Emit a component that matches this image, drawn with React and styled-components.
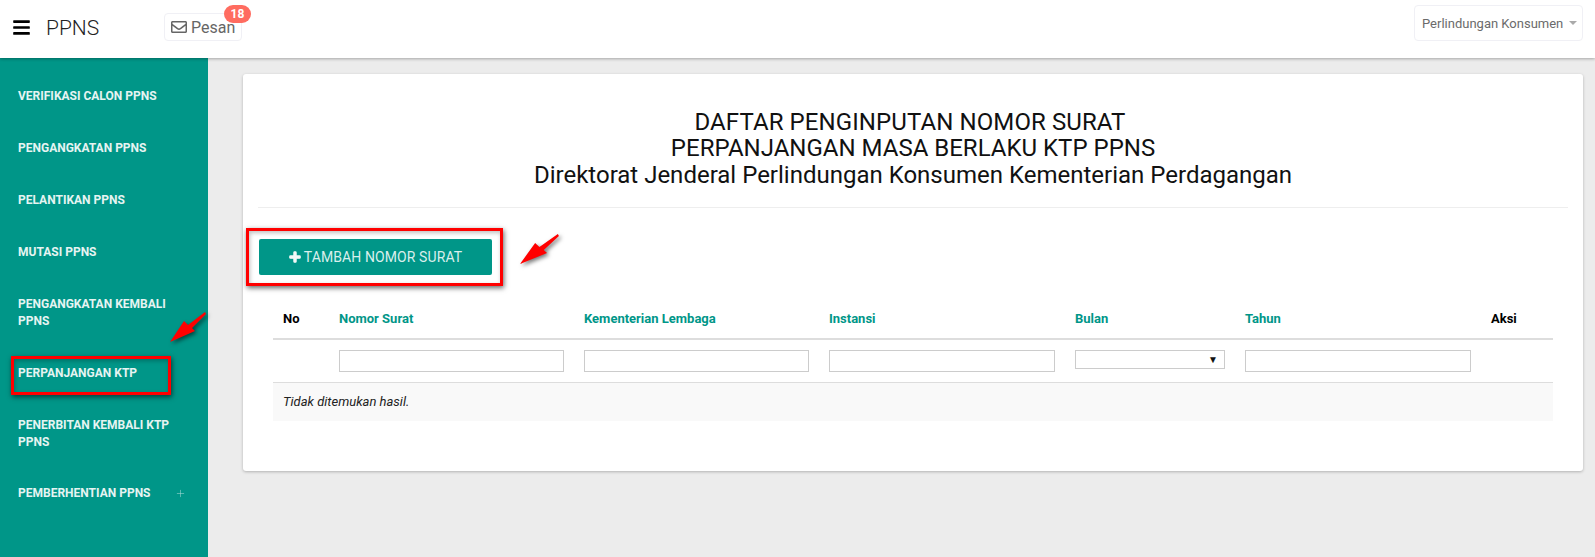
import React from 'react';
import styled, { createGlobalStyle } from 'styled-components';
import { FaBars, FaRegEnvelope, FaPlus } from 'react-icons/fa';
import { Plus } from 'lucide-react';

const GlobalStyle = createGlobalStyle`
  html, body { margin: 0; padding: 0; height: 100%; overflow: hidden; }
  body { font-family: Roboto, "Liberation Sans", sans-serif; background: #ececec; color: #000; }
  * { box-sizing: border-box; }
`;

const Page = styled.div`
  position: relative;
  width: 1595px;
  height: 557px;
  overflow: hidden;
  display: flex;
  flex-direction: column;
`;

const Header = styled.header`
  position: relative;
  z-index: 2;
  height: 58px;
  flex: none;
  background: #fff;
  box-shadow: 0 1px 3px rgba(0, 0, 0, 0.3);
  display: flex;
  align-items: flex-start;
  padding: 5px 12px 0 13px;
`;

const Burger = styled.div`
  width: 17px;
  margin-top: 13px;
  font-size: 19px;
  line-height: 19px;
  color: #000;
  display: flex;
  svg { display: block; }
`;

const Brand = styled.div`
  margin: 11px 0 0 16px;
  width: 118px;
  font-size: 21px;
  line-height: 24px;
  font-weight: 300;
  color: #222;
`;

const MessageButton = styled.div`
  position: relative;
  margin-top: 8px;
  width: 78px;
  height: 28px;
  border: 1px solid #f0f0f5;
  border-radius: 4px;
  display: flex;
  align-items: center;
  gap: 4px;
  padding-left: 6px;
  font-size: 16px;
  color: #666;
`;

const Badge = styled.span`
  position: absolute;
  top: -9px;
  left: 59px;
  width: 27px;
  height: 18px;
  border-radius: 9px;
  background: #ff6c60;
  color: #fff;
  font-size: 12px;
  font-weight: 700;
  display: flex;
  align-items: center;
  justify-content: center;
`;

const Dropdown = styled.div`
  margin-left: auto;
  width: 169px;
  height: 36px;
  border: 1px solid #f0f0f5;
  border-radius: 4px;
  display: flex;
  align-items: center;
  padding-left: 7px;
  font-size: 13px;
  color: #6b6b6b;
`;

const Caret = styled.span`
  margin-left: 6px;
  width: 0;
  height: 0;
  border-left: 4px solid transparent;
  border-right: 4px solid transparent;
  border-top: 4px solid #aaa;
`;

const Body = styled.div`
  flex: 1;
  display: flex;
  min-height: 0;
`;

const Sidebar = styled.nav`
  width: 208px;
  flex: none;
  background: #009688;
  padding-top: 12px;
`;

const MenuItem = styled.div`
  position: relative;
  padding: 17.5px 18px;
  font-size: 12px;
  line-height: 17px;
  font-weight: 700;
  color: #e6f4f2;
  &:last-child { margin-top: -1px; }
`;

const MenuPlus = styled.span`
  position: absolute;
  top: 21px;
  left: 175px;
  color: #a5dbd4;
  display: flex;
`;

const Main = styled.main`
  flex: 1;
  padding: 16px 12px 0 35px;
  min-width: 0;
`;

const Card = styled.section`
  position: relative;
  height: 397px;
  background: #fff;
  border-radius: 3px;
  box-shadow: 0 1px 3px rgba(0, 0, 0, 0.25);
  padding: 35px 15px 0;
`;

const Title = styled.h1`
  margin: 0;
  font-size: 24px;
  line-height: 26.4px;
  font-weight: 400;
  text-align: center;
  color: #111;
`;

const TitleFirstLine = styled.span`
  letter-spacing: 0.1px;
`;

const Rule = styled.hr`
  margin: 19px 0 0;
  border: 0;
  border-top: 1px solid #eee;
`;

const Toolbar = styled.div`
  position: relative;
  margin: 31px 0 0 1px;
`;

const AddButton = styled.button`
  width: 233px;
  height: 36px;
  border: 0;
  border-radius: 2px;
  background: #009688;
  color: #d9efec;
  font-family: inherit;
  font-size: 14px;
  letter-spacing: 0.1px;
  display: flex;
  align-items: center;
  justify-content: center;
  gap: 3px;
  svg { color: #f2f8f7; stroke: currentColor; stroke-width: 50; }
`;

const Highlight = styled.div`
  position: absolute;
  left: ${p => p.$left}px;
  top: ${p => p.$top}px;
  width: ${p => p.$width}px;
  height: ${p => p.$height}px;
  border: 3.5px solid #f00;
  box-shadow: 1px 2px 5px rgba(0, 0, 0, 0.6), inset 1px 2px 4px rgba(0, 0, 0, 0.25);
  pointer-events: none;
`;

const ArrowSvg = styled.svg`
  position: absolute;
  left: ${p => p.$left}px;
  top: ${p => p.$top}px;
  overflow: visible;
  filter: drop-shadow(2px 2px 2px rgba(0, 0, 0, 0.55));
`;

const Grid = styled.table`
  width: 1280px;
  margin: 21px 0 0 15px;
  border-collapse: collapse;
  table-layout: fixed;
  font-size: 12px;
`;

const Th = styled.th`
  height: 43px;
  padding: 2px 10px 0;
  text-align: left;
  font-weight: 700;
  font-size: 13px;
  color: ${p => (p.$link ? '#009688' : '#000')};
  border-bottom: 2px solid #ddd;
`;

const FilterCell = styled.td`
  height: 43px;
  padding: 10px 10px 0;
  vertical-align: top;
  border-bottom: 1px solid #ddd;
`;

const FilterInput = styled.input`
  display: block;
  width: 100%;
  height: 22px;
  border: 1px solid #ccc;
  background: #fff;
  padding: 0 4px;
`;

const FilterSelect = styled.div`
  height: 19px;
  border: 1px solid #ccc;
  display: flex;
  align-items: center;
  justify-content: flex-end;
  padding-right: 6px;
  font-size: 10px;
  color: #111;
`;

const EmptyCell = styled.td`
  height: 39px;
  padding: 0 10px;
  background: #f9f9f9;
  font-style: italic;
  font-size: 13px;
  color: #222;
`;

const columns = [
  { label: 'No', width: 56 },
  { label: 'Nomor Surat', width: 245, link: true, filter: 'input' },
  { label: 'Kementerian Lembaga', width: 245, link: true, filter: 'input' },
  { label: 'Instansi', width: 246, link: true, filter: 'input' },
  { label: 'Bulan', width: 170, link: true, filter: 'select' },
  { label: 'Tahun', width: 246, link: true, filter: 'input' },
  { label: 'Aksi', width: 72 },
];

const menu = [
  'VERIFIKASI CALON PPNS',
  'PENGANGKATAN PPNS',
  'PELANTIKAN PPNS',
  'MUTASI PPNS',
  'PENGANGKATAN KEMBALI PPNS',
  'PERPANJANGAN KTP',
  'PENERBITAN KEMBALI KTP PPNS',
  'PEMBERHENTIAN PPNS',
];

const Arrow = ({ left, top, width = 37 }) => (
  <ArrowSvg $left={left} $top={top} width={width} height="31" viewBox="0 0 37 31" preserveAspectRatio="none">
    <polygon points="0,30 14,9 18,13 35,0 36,2 22,16 25,19" fill="#f00" />
  </ArrowSvg>
);

const App = () => (
  <Page>
    <GlobalStyle />
    <Header>
      <Burger><FaBars /></Burger>
      <Brand>PPNS</Brand>
      <MessageButton>
        <FaRegEnvelope size={16} />
        Pesan
        <Badge>18</Badge>
      </MessageButton>
      <Dropdown>
        Perlindungan Konsumen
        <Caret />
      </Dropdown>
    </Header>
    <Body>
      <Sidebar>
        {menu.map((item) => (
          <MenuItem key={item}>
            {item}
            {item === 'PEMBERHENTIAN PPNS' && (
              <MenuPlus><Plus size={11} strokeWidth={1.2} /></MenuPlus>
            )}
            {item === 'PERPANJANGAN KTP' && (
              <>
                <Highlight $left={11} $top={9} $width={160} $height={39} />
                <Arrow left={170} top={-35} />
              </>
            )}
          </MenuItem>
        ))}
      </Sidebar>
      <Main>
        <Card>
          <Title>
            <TitleFirstLine>DAFTAR PENGINPUTAN NOMOR SURAT&nbsp;</TitleFirstLine><br />
            PERPANJANGAN MASA BERLAKU KTP PPNS<br />
            Direktorat Jenderal Perlindungan Konsumen Kementerian Perdagangan
          </Title>
          <Rule />
          <Toolbar>
            <AddButton><FaPlus size={12} /> TAMBAH NOMOR SURAT</AddButton>
            <Highlight $left={-13} $top={-11} $width={257} $height={58} />
            <Arrow left={261} top={-5} width={40} />
          </Toolbar>
          <Grid>
            <colgroup>
              {columns.map((c) => <col key={c.label} style={{ width: c.width }} />)}
            </colgroup>
            <thead>
              <tr>
                {columns.map((c) => <Th key={c.label} $link={c.link}>{c.label}</Th>)}
              </tr>
            </thead>
            <tbody>
              <tr>
                {columns.map((c) => (
                  <FilterCell key={c.label}>
                    {c.filter === 'input' && <FilterInput />}
                    {c.filter === 'select' && <FilterSelect>▼</FilterSelect>}
                  </FilterCell>
                ))}
              </tr>
              <tr>
                <EmptyCell colSpan={7}>Tidak ditemukan hasil.</EmptyCell>
              </tr>
            </tbody>
          </Grid>
        </Card>
      </Main>
    </Body>
  </Page>
);

export default App;
